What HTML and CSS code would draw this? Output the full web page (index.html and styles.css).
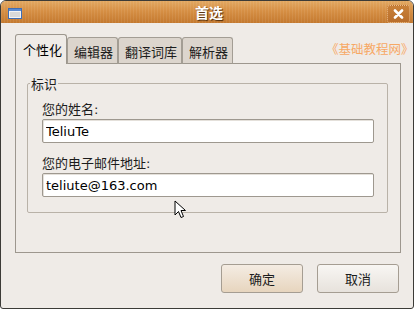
FILE: index.html
```html
<!DOCTYPE html>
<html lang="zh-CN">
<head>
  <meta charset="UTF-8" />
  <title>首选</title>
  <link rel="stylesheet" href="styles.css">
</head>
<body>
  <div class="window">
    <div class="titlebar">
      <span class="app-icon">
        <svg width="14" height="11" viewBox="0 0 14 11">
          <rect x="0.5" y="0.5" width="13" height="10" fill="#f4f4f4" stroke="#3f6db3"/>
          <rect x="1" y="1" width="12" height="2" fill="#5b8ad0"/>
          <rect x="2" y="4" width="10" height="5" fill="#d9d9d9"/>
        </svg>
      </span>
      <span class="title">首选</span>
      <span class="close-btn">
        <svg width="11" height="10" viewBox="0 0 11 10">
          <path d="M2 1.5 L9 8.5 M9 1.5 L2 8.5" stroke="#fff" stroke-width="2.6" stroke-linecap="round"/>
        </svg>
      </span>
    </div>

    <div class="content">
      <div class="notebook">
        <div class="tabs">
          <div class="tab active">个性化</div>
          <div class="tab">编辑器</div>
          <div class="tab">翻译词库</div>
          <div class="tab">解析器</div>
        </div>
        <div class="tab-panel">
          <fieldset class="frame">
            <legend>标识</legend>
            <label class="field-label" for="name">您的姓名:</label>
            <input class="entry" id="name" type="text" value="TeliuTe">
            <label class="field-label second" for="mail">您的电子邮件地址:</label>
            <input class="entry" id="mail" type="text" value="teliute@163.com">
          </fieldset>
        </div>
      </div>

      <div class="buttons">
        <button class="btn default">确定</button>
        <button class="btn">取消</button>
      </div>
    </div>

    <!-- overlays -->
    <div class="watermark">《基础教程网》</div>
    <svg class="cursor" width="13" height="19" viewBox="0 0 13 19">
      <path d="M1 1 L1 15 L4.5 11.5 L7 17.5 L9.5 16.5 L7 10.5 L11.5 10.5 Z" fill="#fff" stroke="#000" stroke-width="1" stroke-linejoin="round"/>
    </svg>
  </div>
</body>
</html>
```

FILE: styles.css
```css
:root {
  --window-bg: #efebe7;
  --tab-bg: #dcd5cd;
  --border: #9d978e;
  --frame-border: #b9b2a8;
  --text: #1c1c1c;
}

* {
  box-sizing: border-box;
}

body {
  margin: 0;
  background: #fff;
  font-family: "DejaVu Sans", "Noto Sans CJK SC", sans-serif;
  font-size: 13px;
  color: var(--text);
}

.window {
  position: relative;
  width: 414px;
  height: 309px;
  border: 1px solid #3c3b37;
  border-radius: 6px 6px 3px 3px;
  background: var(--window-bg);
  overflow: hidden;
}

/* Title bar */
.titlebar {
  height: 22px;
  display: grid;
  grid-template-columns: 23px 1fr 23px;
  align-items: center;
  padding: 0 3px 0 7px;
  background:
    repeating-linear-gradient(90deg, rgba(255, 255, 255, 0.07) 0 1px, transparent 1px 3px),
    linear-gradient(#e2a862, #d68f44 45%, #c4792f);
}

.app-icon {
  display: flex;
  margin-top: 2px;
}

.title {
  text-align: center;
  font-family: "Noto Sans CJK SC", sans-serif;
  font-weight: bold;
  font-size: 14px;
  line-height: 18px;
  color: #fff;
  text-shadow: 1px 1px 1px #4d2b0b;
}

.close-btn {
  width: 23px;
  height: 18px;
  margin-top: 3px;
  display: flex;
  align-items: center;
  justify-content: center;
  border: 1px dotted #ecbd8b;
  border-radius: 3px;
  background: linear-gradient(#c98139, #b96e2b);
}

/* Dialog body */
.content {
  padding: 11px 12px 0 14px;
}

.tabs {
  display: flex;
  align-items: flex-end;
  height: 30px;
  margin-bottom: -1px;
  position: relative;
  z-index: 1;
}

.tab {
  height: 27px;
  display: flex;
  align-items: center;
  padding: 2px 4px 0 6px;
  border: 1px solid #a39d94;
  border-radius: 3px 3px 0 0;
  background: var(--tab-bg);
  border-bottom-color: var(--border);
  font-family: "Noto Sans CJK SC", sans-serif;
  line-height: 17px;
}

.tab.active {
  height: 30px;
  padding: 0 4px 0 7px;
  background: var(--window-bg);
  border-color: var(--border);
  border-bottom: none;
  color: #000;
}

.tab-panel {
  height: 190px;
  border: 1px solid var(--border);
  padding: 11px 12px 0 11px;
}

.frame {
  margin: 0;
  min-width: 0;
  padding: 9px 13px 15px 14px;
  border: 1px solid var(--frame-border);
  border-radius: 2px;
}

.frame legend {
  margin-left: -12px;
  padding: 0 1px;
  line-height: 17px;
  font-family: "Noto Sans CJK SC", sans-serif;
}

.field-label {
  display: block;
  line-height: 17px;
  margin-bottom: 1px;
}

.field-label.second {
  margin-top: 12px;
}

.entry {
  display: block;
  width: 100%;
  height: 24px;
  margin: 0;
  padding: 0 3px;
  border: 1px solid #9e988f;
  border-radius: 2px;
  background: #fff;
  box-shadow: inset 1px 1px 0 #e4e0da;
  font-family: "DejaVu Sans", sans-serif;
  font-size: 13px;
  color: #000;
  outline: none;
}

/* Action buttons */
.buttons {
  display: flex;
  justify-content: flex-end;
  gap: 14px;
  margin-top: 11px;
  padding-right: 2px;
}

.btn {
  width: 82px;
  height: 29px;
  border: 1px solid #a59d92;
  border-radius: 3px;
  background: linear-gradient(#f8f6f3, #e7e2dc);
  font-family: "Noto Sans CJK SC", sans-serif;
  font-size: 13px;
  color: var(--text);
  padding: 0;
}

.btn.default {
  background: linear-gradient(#f4ece3, #e7d5be);
}

/* Overlays */
.watermark {
  position: absolute;
  left: 325px;
  top: 39px;
  font-family: "Noto Sans CJK SC", sans-serif;
  font-size: 12.5px;
  line-height: 17px;
  color: #f7a864;
}

.cursor {
  position: absolute;
  left: 173px;
  top: 199px;
}
```
